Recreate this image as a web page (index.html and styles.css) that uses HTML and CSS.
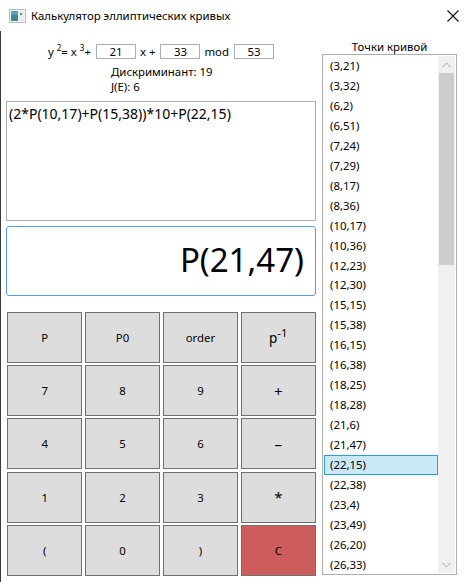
FILE: index.html
```html
<!DOCTYPE html>
<html lang="ru">
<head>
<meta charset="utf-8">
<title>Калькулятор эллиптических кривых</title>
<link rel="stylesheet" href="styles.css">
</head>
<body>
<div class="win">
  <div class="titlebar">
    <svg class="appicon" width="17" height="14" viewBox="0 0 17 14">
      <rect x="0.5" y="0.5" width="16" height="13" fill="#f4f6f6" stroke="#b8bcbe"/>
      <rect x="2" y="2" width="7" height="10" fill="#3f8a8c"/>
      <rect x="2" y="2" width="7" height="4" fill="#5aa0b8"/>
      <rect x="10" y="2" width="5" height="10" fill="#e6ecec"/>
      <rect x="11" y="4" width="2" height="2" fill="#5f9a6a"/>
    </svg>
    <span class="title">Калькулятор эллиптических кривых</span>
    <svg class="close" width="12" height="12" viewBox="0 0 12 12">
      <path d="M0.5 0.5 L11.5 11.5 M11.5 0.5 L0.5 11.5" stroke="#111" stroke-width="1.1" fill="none"/>
    </svg>
  </div>
  <div class="client">
    <div class="left">
      <div class="eq">
        <span class="eqtext">y <sup>2</sup>= x <sup>3</sup>+</span>
        <span class="tb tb1">21</span>
        <span class="eqtext lbl2">x +</span>
        <span class="tb">33</span>
        <span class="eqtext lbl2">mod</span>
        <span class="tb">53</span>
      </div>
      <div class="info">
        <div>Дискриминант: 19</div>
        <div>J(E): 6</div>
      </div>
      <div class="expr">(2*P(10,17)+P(15,38))*10+P(22,15)</div>
      <div class="result">P(21,47)</div>
      <div class="keys">
        <div class="key">P</div>
        <div class="key">P0</div>
        <div class="key">order</div>
        <div class="key pinv"><span><span class="pbig">p</span><sup>-1</sup></span></div>
        <div class="key">7</div>
        <div class="key">8</div>
        <div class="key">9</div>
        <div class="key op">+</div>
        <div class="key">4</div>
        <div class="key">5</div>
        <div class="key">6</div>
        <div class="key op">–</div>
        <div class="key">1</div>
        <div class="key">2</div>
        <div class="key">3</div>
        <div class="key op">*</div>
        <div class="key">(</div>
        <div class="key">0</div>
        <div class="key">)</div>
        <div class="key clear">C</div>
      </div>
    </div>
    <div class="right">
      <div class="label">Точки кривой</div>
      <div class="listbox">
        <div class="items">
          <div class="item">(3,21)</div>
          <div class="item">(3,32)</div>
          <div class="item">(6,2)</div>
          <div class="item">(6,51)</div>
          <div class="item">(7,24)</div>
          <div class="item">(7,29)</div>
          <div class="item">(8,17)</div>
          <div class="item">(8,36)</div>
          <div class="item">(10,17)</div>
          <div class="item">(10,36)</div>
          <div class="item">(12,23)</div>
          <div class="item">(12,30)</div>
          <div class="item">(15,15)</div>
          <div class="item">(15,38)</div>
          <div class="item">(16,15)</div>
          <div class="item">(16,38)</div>
          <div class="item">(18,25)</div>
          <div class="item">(18,28)</div>
          <div class="item">(21,6)</div>
          <div class="item">(21,47)</div>
          <div class="item selected">(22,15)</div>
          <div class="item">(22,38)</div>
          <div class="item">(23,4)</div>
          <div class="item">(23,49)</div>
          <div class="item">(26,20)</div>
          <div class="item">(26,33)</div>
        </div>
        <div class="scrollbar">
          <div class="sbbtn">
            <svg width="9" height="6" viewBox="0 0 9 6"><path d="M0.5 5 L4.5 1 L8.5 5" stroke="#a3a3a3" stroke-width="1" fill="none"/></svg>
          </div>
          <div class="thumb"></div>
          <div class="track"></div>
          <div class="sbbtn">
            <svg width="9" height="6" viewBox="0 0 9 6"><path d="M0.5 1 L4.5 5 L8.5 1" stroke="#a3a3a3" stroke-width="1" fill="none"/></svg>
          </div>
        </div>
      </div>
    </div>
  </div>
</div>
</body>
</html>
```

FILE: styles.css
```css
* { box-sizing: border-box; }
html, body { margin: 0; padding: 0; background: #ffffff; }
body {
  font-family: "Noto Sans", "Open Sans", sans-serif;
  font-size: 11.4px;
  color: #000;
}
.win {
  width: 464px;
  height: 582px;
  overflow: hidden;
  background: #fff;
}
.titlebar {
  height: 31px;
  display: flex;
  align-items: center;
  padding-left: 9px;
  padding-right: 5px;
}
.appicon { display: block; margin-right: 5px; margin-top: 1px; }
.title { flex: 1; line-height: 16px; }
.close { display: block; margin-top: 1px; margin-left: auto; }
.client {
  display: flex;
  height: 551px;
  border-left: 1px solid #3a3a3a;
}
.left {
  width: 315px;
  padding-left: 5px;
  display: flex;
  flex-direction: column;
}
.eq {
  display: flex;
  align-items: center;
  justify-content: center;
  margin-top: 13px;
  height: 15px;
  line-height: 15px;
}
.eqtext { white-space: nowrap; }
.eqtext sup { font-size: 8px; vertical-align: 5px; line-height: 0; }
.tb {
  width: 40px;
  height: 15px;
  border: 1px solid #abadb3;
  text-align: center;
  line-height: 13px;
  margin-left: 5px;
}
.lbl2 { margin-left: 4px; }
.info {
  margin-top: 5px;
  margin-left: 105px;
  line-height: 15px;
  white-space: nowrap;
}
.expr {
  margin-top: 7px;
  height: 120px;
  border: 1px solid #abadb3;
  padding: 2px 2px;
  font-size: 14px;
  line-height: 20px;
  white-space: nowrap;
}
.result {
  margin-top: 5px;
  height: 70px;
  border: 1px solid #569de5;
  border-radius: 3px;
  text-align: right;
  font-size: 33px;
  line-height: 66px;
  padding-right: 11px;
}
.keys {
  margin-top: 16px;
  margin-left: 1px;
  width: 309px;
  display: grid;
  grid-template-columns: repeat(4, 1fr);
  grid-template-rows: repeat(5, 51px);
  column-gap: 2.4px;
  row-gap: 2.2px;
}
.key {
  background: #dddddd;
  border: 1px solid #707070;
  display: flex;
  align-items: center;
  justify-content: center;
}
.key.op { font-size: 15px; }
.key.clear { background: #cd5c5c; }
.pinv .pbig { font-size: 13.5px; }
.pinv sup { font-size: 11.4px; line-height: 0; vertical-align: 6px; }
.right {
  margin-left: 6px;
  width: 135px;
  display: flex;
  flex-direction: column;
}
.label {
  margin-top: 8px;
  height: 15px;
  line-height: 15px;
  text-align: center;
}
.listbox {
  height: 521px;
  flex: none;
  border: 1px solid #abadb3;
  padding: 1px;
  display: flex;
  overflow: hidden;
}
.items {
  flex: 1;
  overflow: hidden;
}
.item {
  height: 19.96px;
  line-height: 17.96px;
  border: 1px solid transparent;
  padding-left: 5px;
}
.item.selected {
  background: #cbe8f6;
  border-color: #26a0da;
}
.scrollbar {
  width: 17px;
  background: #f0f0f0;
  display: flex;
  flex-direction: column;
}
.sbbtn {
  height: 17px;
  display: flex;
  align-items: center;
  justify-content: center;
}
.thumb {
  height: 192px;
  margin: 0 1px;
  background: #cdcdcd;
}
.track { flex: 1; }
```
